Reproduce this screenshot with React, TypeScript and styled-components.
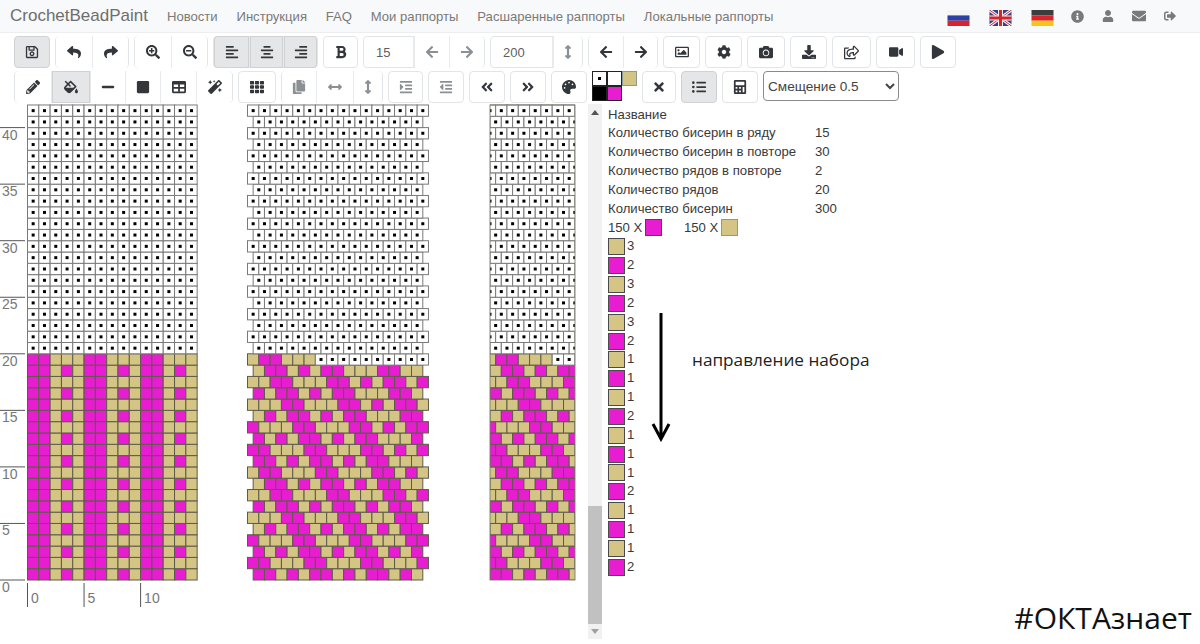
import React from "react";
import styled, { createGlobalStyle } from "styled-components";
import {
  FaAlignCenter,
  FaAlignLeft,
  FaAlignRight,
  FaAngleDoubleLeft,
  FaAngleDoubleRight,
  FaArrowLeft,
  FaArrowRight,
  FaArrowsAltH,
  FaArrowsAltV,
  FaBold,
  FaCalculator,
  FaCamera,
  FaCog,
  FaCopy,
  FaDownload,
  FaEnvelope,
  FaFillDrip,
  FaIndent,
  FaInfoCircle,
  FaListUl,
  FaMagic,
  FaMinus,
  FaOutdent,
  FaPalette,
  FaPencilAlt,
  FaPlay,
  FaRegImage,
  FaRegSave,
  FaRegShareSquare,
  FaReply,
  FaSearchMinus,
  FaSearchPlus,
  FaShare,
  FaSignOutAlt,
  FaSquare,
  FaTable,
  FaTh,
  FaTimes,
  FaUser,
  FaVideo,
} from "react-icons/fa";

const MAGENTA = "#e81dd2";
const TAN = "#d4c584";

const GlobalStyle = createGlobalStyle`
  html, body {
    margin: 0;
    padding: 0;
    background: #fff;
    font-family: "Liberation Sans", Arial, sans-serif;
  }
`;

const Page = styled.div`
  position: relative;
  width: 1200px;
  height: 644px;
  overflow: hidden;
  background: #fff;
`;

const Navbar = styled.nav`
  display: flex;
  align-items: center;
  box-sizing: border-box;
  height: 33px;
  padding: 0 24px 0 10px;
  background: #f8f9fa;
  border-bottom: 1px solid #eeeeee;
`;

const Brand = styled.span`
  margin-right: 19px;
  font-size: 17px;
  color: #6e6e6e;
`;

const NavLinks = styled.div`
  display: flex;
  gap: 18.8px;
`;

const NavLink = styled.a`
  font-size: 13.1px;
  color: #7a7a7a;
`;

const NavRight = styled.div`
  display: flex;
  align-items: center;
  gap: 18px;
  margin-left: auto;
  color: #77797c;
`;

const Flags = styled.div`
  display: flex;
  gap: 19px;
  margin: 3px -1px 0 0;
`;

const Toolbars = styled.div`
  display: flex;
  flex-direction: column;
  gap: 3px;
  padding: 3px 0 0 14px;
`;

const ToolRow = styled.div`
  display: flex;
  align-items: flex-start;
  gap: 5px;
  height: 32px;
`;

const Group = styled.div`
  display: flex;
  border: 1px solid #e2e5e8;
  border-radius: 4px;
  background: #fff;
`;

const ToolButton = styled.button<{ $w: number; $active?: boolean; $muted?: boolean }>`
  display: flex;
  align-items: center;
  justify-content: center;
  box-sizing: border-box;
  width: ${(p) => p.$w}px;
  height: 32px;
  margin: -1px 0;
  padding: 0;
  border: 0;
  border-left: 1px solid #e8eaec;
  background: ${(p) => (p.$active ? "#e4e6e8" : "#fff")};
  box-shadow: ${(p) => (p.$active ? "inset 0 0 0 1px #cfd2d5" : "none")};
  color: ${(p) => (p.$muted ? "#8b9095" : "#33373b")};
  font-size: 14px;

  &:first-child {
    border-left: 0;
    border-radius: 4px 0 0 4px;
  }
  &:last-child {
    border-radius: 0 4px 4px 0;
  }
`;

const SingleButton = styled(ToolButton)`
  border: 1px solid ${(p) => (p.$active ? "#cfd2d5" : "#e2e5e8")};
  margin: 0;
  border-radius: 4px;
  box-shadow: none;

  &:first-child {
    border: 1px solid ${(p) => (p.$active ? "#cfd2d5" : "#e2e5e8")};
    border-radius: 4px;
  }
  &:last-child {
    border-radius: 4px;
  }
`;

const NumberField = styled.input<{ $w: number }>`
  box-sizing: border-box;
  width: ${(p) => p.$w}px;
  height: 30px;
  padding: 0 0 0 12px;
  border: 0;
  border-right: 1px solid #e8eaec;
  border-radius: 4px 0 0 4px;
  background: transparent;
  color: #5c5f63;
  font-family: inherit;
  font-size: 13px;
  outline: none;
`;

const ColorPicker = styled.div`
  display: flex;
  align-items: flex-start;
`;

const ColorBlock = styled.div`
  display: grid;
  grid-template-columns: 15px 15px;
  grid-auto-rows: 15px;
`;

const ColorCell = styled.div<{ $color: string }>`
  display: flex;
  align-items: center;
  justify-content: center;
  box-sizing: border-box;
  border: 1px solid #222;
  background: ${(p) => p.$color};
`;

const SelectedDot = styled.span`
  width: 3px;
  height: 3px;
  background: #000;
`;

const AccentCell = styled.div`
  box-sizing: border-box;
  width: 15px;
  height: 15px;
  border: 1px solid #8b9a98;
  background: ${TAN};
`;

const OffsetSelect = styled.select`
  box-sizing: border-box;
  width: 136px;
  height: 30px;
  padding: 0;
  border: 1px solid #8a8a8a;
  border-radius: 4px;
  background: #fff;
  color: #444;
  font-family: inherit;
  font-size: 13.6px;
`;

const Workspace = styled.main`
  display: flex;
  height: 536px;
  margin-top: 1px;
`;

const ChartBox = styled.div`
  flex: 0 0 588px;
  height: 536px;
`;

const ScrollTrack = styled.div`
  display: flex;
  flex-direction: column;
  flex: 0 0 14px;
  height: 535px;
  background: #f1f1f1;
`;

const ScrollArrow = styled.div<{ $down?: boolean }>`
  display: flex;
  align-items: center;
  justify-content: center;
  height: 15px;
  margin-top: ${(p) => (p.$down ? "0" : "1px")};

  &::before {
    content: "";
    border-left: 4px solid transparent;
    border-right: 4px solid transparent;
    border-bottom: ${(p) => (p.$down ? "0" : "5px solid #555")};
    border-top: ${(p) => (p.$down ? "5px solid #a0a0a0" : "0")};
  }
`;

const ScrollSpace = styled.div`
  flex: 1;
`;

const ScrollThumb = styled.div`
  height: 118px;
  background: #c1c1c1;
`;

const InfoPanel = styled.aside`
  padding: 1.5px 0 0 6px;
  color: #3a3a3a;
  font-size: 13.15px;
  line-height: 18.85px;
`;

const InfoRow = styled.div`
  display: flex;
  height: 18.85px;
`;

const InfoLabel = styled.span`
  width: 207px;
`;

const TotalsRow = styled.div`
  display: flex;
  align-items: center;
  height: 18.85px;
`;

const TotalItem = styled.span`
  display: flex;
  align-items: center;
  gap: 3px;
  width: 76px;
`;

const Swatch = styled.span<{ $color: string; $soft?: boolean }>`
  display: block;
  box-sizing: border-box;
  width: 17px;
  height: 17px;
  border: 1px solid ${(p) => (p.$soft ? "#8b9a98" : "#4a4a4a")};
  background: ${(p) => p.$color};
`;

const RepeatRow = styled.div`
  display: flex;
  align-items: center;
  gap: 2px;
  height: 18.85px;
`;

const Direction = styled.div`
  position: absolute;
  left: 692px;
  top: 348px;
  color: #222;
  font-family: "Open Sans", sans-serif;
  font-size: 17.2px;
`;

const DirectionArrow = styled.svg`
  position: absolute;
  left: 650px;
  top: 312px;
`;

const Watermark = styled.div`
  position: absolute;
  right: 8px;
  top: 597px;
  color: #111;
  font-family: "Open Sans", sans-serif;
  font-size: 30px;
`;

const navItems = [
  "Новости",
  "Инструкция",
  "FAQ",
  "Мои раппорты",
  "Расшаренные раппорты",
  "Локальные раппорты",
];

const infoRows = [
  { label: "Количество бисерин в ряду", value: "15" },
  { label: "Количество бисерин в повторе", value: "30" },
  { label: "Количество рядов в повторе", value: "2" },
  { label: "Количество рядов", value: "20" },
  { label: "Количество бисерин", value: "300" },
];

// цвет и длина каждого отрезка раппорта, как в списке справа
const repeats: Array<[string, number]> = [
  [TAN, 3],
  [MAGENTA, 2],
  [TAN, 3],
  [MAGENTA, 2],
  [TAN, 3],
  [MAGENTA, 2],
  [TAN, 1],
  [MAGENTA, 1],
  [TAN, 1],
  [MAGENTA, 2],
  [TAN, 1],
  [MAGENTA, 1],
  [TAN, 1],
  [MAGENTA, 2],
  [TAN, 1],
  [MAGENTA, 1],
  [TAN, 1],
  [MAGENTA, 2],
];

// раппорт читается снизу вверх, поэтому список разворачиваем
const sequence: string[] = [...repeats]
  .reverse()
  .flatMap(([color, count]) => Array<string>(count).fill(color));

const CELL = 11.31;
const BASE_Y = 476;
const ROWS = 42;
const TOTAL = 300;

const beadColor = (index: number) =>
  index < TOTAL ? sequence[index % sequence.length] : "#fff";

const Bead: React.FC<{ x: number; y: number; index: number }> = ({ x, y, index }) => {
  const empty = index >= TOTAL;
  return (
    <>
      <rect
        x={x}
        y={y}
        width={CELL}
        height={CELL}
        fill={beadColor(index)}
        stroke={empty ? "#7a7a7a" : "#5f5a4a"}
        strokeWidth={1}
      />
      {empty && (
        <rect x={x + CELL / 2 - 1.5} y={y + CELL / 2 - 1.5} width={3} height={3} fill="#000" />
      )}
    </>
  );
};

const rowStart = (row: number) =>
  31 * Math.floor(row / 2) + (row % 2 === 1 ? 15 : 0);

const rowIndexes = Array.from({ length: ROWS }, (_, i) => i);
const rowY = (row: number) => BASE_Y - (row + 1) * CELL;

const Chart: React.FC = () => (
  <svg width={588} height={536} viewBox="0 0 588 536">
    <defs>
      <clipPath id="tube">
        <rect x={490} y={0} width={85} height={BASE_Y} />
      </clipPath>
    </defs>

    {/* левая шкала */}
    {[0, 5, 10, 15, 20, 25, 30, 35, 40].map((n) => (
      <g key={n}>
        <line
          x1={0}
          x2={25}
          y1={BASE_Y - n * CELL}
          y2={BASE_Y - n * CELL}
          stroke="#555"
          strokeWidth={1}
        />
        <text
          x={2}
          y={BASE_Y - n * CELL + 12}
          fontFamily="Liberation Sans"
          fontSize={14}
          fill="#777"
        >
          {n}
        </text>
      </g>
    ))}

    {/* нижняя шкала */}
    {[0, 5, 10].map((n) => (
      <g key={n}>
        <line
          x1={27.5 + n * CELL}
          x2={27.5 + n * CELL}
          y1={479}
          y2={503}
          stroke="#555"
          strokeWidth={1}
        />
        <text
          x={31 + n * CELL}
          y={499}
          fontFamily="Liberation Sans"
          fontSize={14}
          fill="#777"
        >
          {n}
        </text>
      </g>
    ))}

    {/* прямая схема */}
    {rowIndexes.map((row) =>
      Array.from({ length: 15 }, (_, c) => (
        <Bead key={`a${row}-${c}`} x={27.5 + c * CELL} y={rowY(row)} index={15 * row + c} />
      ))
    )}

    {/* схема со смещением */}
    {rowIndexes.map((row) => {
      const long = row % 2 === 1;
      const start = long ? 247.5 : 247.5 + CELL / 2;
      return Array.from({ length: long ? 16 : 15 }, (_, c) => (
        <Bead key={`b${row}-${c}`} x={start + c * CELL} y={rowY(row)} index={rowStart(row) + c} />
      ));
    })}

    {/* вид жгута */}
    <g clipPath="url(#tube)">
      {rowIndexes.map((row) => {
        const long = row % 2 === 1;
        const start = long ? 490 - CELL / 2 : 490;
        return Array.from({ length: 8 }, (_, c) => (
          <Bead key={`c${row}-${c}`} x={start + c * CELL} y={rowY(row)} index={rowStart(row) + c} />
        ));
      })}
    </g>
    <rect
      x={490}
      y={BASE_Y - ROWS * CELL}
      width={85}
      height={ROWS * CELL}
      fill="none"
      stroke="#7d7d6c"
      strokeWidth={0.9}
    />
  </svg>
);

const FlagRu = () => (
  <svg width={23} height={16} viewBox="0 0 22 16">
    <rect width={22} height={5.4} fill="#f4f4f4" />
    <rect y={5.4} width={22} height={5.3} fill="#2b3fa8" />
    <rect y={10.7} width={22} height={5.3} fill="#d8232f" />
  </svg>
);

const FlagUk = () => (
  <svg width={23} height={16} viewBox="0 0 22 16">
    <rect width={22} height={16} fill="#3b3f86" />
    <path d="M0 0L22 16M22 0L0 16" stroke="#f2f2f2" strokeWidth={3} />
    <path d="M0 0L22 16M22 0L0 16" stroke="#d0303f" strokeWidth={1} />
    <path d="M11 0V16M0 8H22" stroke="#f2f2f2" strokeWidth={5} />
    <path d="M11 0V16M0 8H22" stroke="#d8232f" strokeWidth={3} />
  </svg>
);

const FlagDe = () => (
  <svg width={23} height={16} viewBox="0 0 22 16">
    <rect width={22} height={5.4} fill="#3d3d3d" />
    <rect y={5.4} width={22} height={5.3} fill="#d9242b" />
    <rect y={10.7} width={22} height={5.3} fill="#f5c518" />
  </svg>
);

const App: React.FC = () => {
  return (
    <Page>
      <GlobalStyle />
      <Navbar>
        <Brand>CrochetBeadPaint</Brand>
        <NavLinks>
          {navItems.map((item) => (
            <NavLink key={item}>{item}</NavLink>
          ))}
        </NavLinks>
        <NavRight>
          <Flags>
            <FlagRu />
            <FlagUk />
            <FlagDe />
          </Flags>
          <FaInfoCircle size={13} />
          <FaUser size={12} />
          <FaEnvelope size={14} />
          <FaSignOutAlt size={12} />
        </NavRight>
      </Navbar>

      <Toolbars>
        <ToolRow>
          <SingleButton $w={36} $active>
            <FaRegSave />
          </SingleButton>
          <Group>
            <ToolButton $w={36}><FaReply /></ToolButton>
            <ToolButton $w={36}><FaShare /></ToolButton>
          </Group>
          <Group>
            <ToolButton $w={36}><FaSearchPlus /></ToolButton>
            <ToolButton $w={36}><FaSearchMinus /></ToolButton>
          </Group>
          <Group>
            <ToolButton $w={35} $active><FaAlignLeft /></ToolButton>
            <ToolButton $w={34} $active><FaAlignCenter /></ToolButton>
            <ToolButton $w={34} $active><FaAlignRight /></ToolButton>
          </Group>
          <SingleButton $w={35}>
            <FaBold />
          </SingleButton>
          <Group>
            <NumberField $w={50} defaultValue="15" readOnly />
            <ToolButton $w={35} $muted><FaArrowLeft /></ToolButton>
            <ToolButton $w={35} $muted><FaArrowRight /></ToolButton>
          </Group>
          <Group>
            <NumberField $w={62} defaultValue="200" readOnly />
            <ToolButton $w={29} $muted><FaArrowsAltV /></ToolButton>
          </Group>
          <Group>
            <ToolButton $w={34}><FaArrowLeft /></ToolButton>
            <ToolButton $w={34}><FaArrowRight /></ToolButton>
          </Group>
          <SingleButton $w={37}><FaRegImage /></SingleButton>
          <SingleButton $w={37}><FaCog /></SingleButton>
          <SingleButton $w={38}><FaCamera /></SingleButton>
          <SingleButton $w={37}><FaDownload /></SingleButton>
          <SingleButton $w={39}><FaRegShareSquare size={15} /></SingleButton>
          <SingleButton $w={39}><FaVideo /></SingleButton>
          <SingleButton $w={36}><FaPlay /></SingleButton>
        </ToolRow>

        <ToolRow>
          <Group>
            <ToolButton $w={36}><FaPencilAlt /></ToolButton>
            <ToolButton $w={39} $active><FaFillDrip /></ToolButton>
            <ToolButton $w={35}><FaMinus /></ToolButton>
            <ToolButton $w={35}><FaSquare /></ToolButton>
            <ToolButton $w={36}><FaTable /></ToolButton>
            <ToolButton $w={36}><FaMagic /></ToolButton>
          </Group>
          <SingleButton $w={38}><FaTh /></SingleButton>
          <Group>
            <ToolButton $w={34} $muted><FaCopy /></ToolButton>
            <ToolButton $w={37} $muted><FaArrowsAltH /></ToolButton>
            <ToolButton $w={29} $muted><FaArrowsAltV /></ToolButton>
          </Group>
          <SingleButton $w={35} $muted><FaIndent /></SingleButton>
          <SingleButton $w={36} $muted><FaOutdent /></SingleButton>
          <SingleButton $w={36}><FaAngleDoubleLeft /></SingleButton>
          <SingleButton $w={36}><FaAngleDoubleRight /></SingleButton>
          <SingleButton $w={36}><FaPalette /></SingleButton>
          <ColorPicker>
            <ColorBlock>
              <ColorCell $color="#fff"><SelectedDot /></ColorCell>
              <ColorCell $color="#fff" />
              <ColorCell $color="#000" />
              <ColorCell $color={MAGENTA} />
            </ColorBlock>
            <AccentCell />
          </ColorPicker>
          <SingleButton $w={34}><FaTimes /></SingleButton>
          <SingleButton $w={36} $active><FaListUl /></SingleButton>
          <SingleButton $w={36}><FaCalculator /></SingleButton>
          <OffsetSelect defaultValue="0.5">
            <option value="0.5">Смещение 0.5</option>
          </OffsetSelect>
        </ToolRow>
      </Toolbars>

      <Workspace>
        <ChartBox>
          <Chart />
        </ChartBox>
        <ScrollTrack>
          <ScrollArrow />
          <ScrollSpace />
          <ScrollThumb />
          <ScrollArrow $down />
        </ScrollTrack>
        <InfoPanel>
          <InfoRow>Название</InfoRow>
          {infoRows.map((row) => (
            <InfoRow key={row.label}>
              <InfoLabel>{row.label}</InfoLabel>
              {row.value}
            </InfoRow>
          ))}
          <TotalsRow>
            <TotalItem>
              150 X <Swatch $color={MAGENTA} />
            </TotalItem>
            <TotalItem>
              150 X <Swatch $color={TAN} $soft />
            </TotalItem>
          </TotalsRow>
          {repeats.map(([color, count], i) => (
            <RepeatRow key={i}>
              <Swatch $color={color} />
              {count}
            </RepeatRow>
          ))}
        </InfoPanel>
      </Workspace>

      <DirectionArrow width={22} height={130} viewBox="0 0 22 130">
        <path d="M11 1V126M3 112L11 127L19 112" fill="none" stroke="#000" strokeWidth={3} />
      </DirectionArrow>
      <Direction>направление набора</Direction>
      <Watermark>#ОКТАзнает</Watermark>
    </Page>
  );
};

export default App;
